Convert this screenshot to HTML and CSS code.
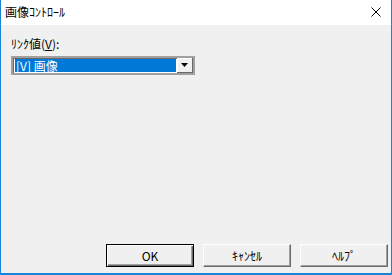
FILE: index.html
```html
<!DOCTYPE html>
<html lang="ja">
<head>
    <meta charset="UTF-8">
    <title>画像ｺﾝﾄﾛｰﾙ</title>
    <link rel="stylesheet" href="styles.css">
</head>
<body>
    <div class="window">
        <div class="titlebar">
            <span class="title-text">画像ｺﾝﾄﾛｰﾙ</span>
            <span class="close-btn">
                <svg width="10" height="10" viewBox="0 0 10 10">
                    <path d="M0.5 0.5 L9.5 9.5 M9.5 0.5 L0.5 9.5" stroke="#000" stroke-width="1"/>
                </svg>
            </span>
        </div>
        <div class="content">
            <div class="field-label">ﾘﾝｸ値(<u>V</u>):</div>
            <div class="combo">
                <div class="combo-value"><span class="combo-selected">[V] 画像</span></div>
                <div class="combo-button">
                    <svg width="7" height="4" viewBox="0 0 7 4">
                        <path d="M0 0 H7 L3.5 4 Z" fill="#000"/>
                    </svg>
                </div>
            </div>
            <div class="spacer"></div>
            <div class="button-row">
                <div class="btn btn-default">OK</div>
                <div class="btn">ｷｬﾝｾﾙ</div>
                <div class="btn">ﾍﾙﾌﾟ</div>
            </div>
        </div>
    </div>
</body>
</html>
```

FILE: styles.css
```css
body {
  margin: 0;
  font-family: "Noto Sans CJK JP", "Liberation Sans", sans-serif;
  font-size: 12px;
  color: #000;
  background: #fff;
}

.window {
  width: 390px;
  height: 273px;
  border-left: 1px solid #1883d7;
  border-right: 1px solid #1883d7;
  border-bottom: 2px solid #1883d7;
  display: flex;
  flex-direction: column;
  background: #f0f0f0;
}

.titlebar {
  height: 25px;
  background: #fff;
  display: flex;
  align-items: center;
  justify-content: space-between;
}

.title-text {
  padding-left: 4px;
  font-size: 12px;
  line-height: 14px;
  margin-top: -1px;
}

.close-btn {
  width: 10px;
  height: 10px;
  margin-right: 10px;
  margin-top: -2px;
  display: flex;
}

.content {
  flex: 1;
  display: flex;
  flex-direction: column;
  padding: 12px 3px 6px 10px;
}

.field-label {
  font-size: 12px;
  line-height: 14px;
  height: 19px;
}

.combo {
  width: 184px;
  height: 19px;
  border-top: 2px solid #a0a0a0;
  border-left: 2px solid #a0a0a0;
  border-bottom: 2px solid #a0a0a0;
  border-right: 2px solid #a0a0a0;
  box-shadow: inset 1px 1px 0 #696969;
  background: #fff;
  display: flex;
  box-sizing: border-box;
  height: 19px;
}

.combo-value {
  flex: 1;
  padding: 1px 1px 1px 2px;
  display: flex;
}

.combo-selected {
  flex: 1;
  background: #0078d7;
  color: #fff;
  font-size: 12px;
  line-height: 13px;
  padding-left: 1px;
}

.combo-button {
  width: 16px;
  background: #f0f0f0;
  border-right: 1px solid #696969;
  border-bottom: 1px solid #696969;
  box-shadow: inset 1px 1px 0 #fff;
  display: flex;
  align-items: center;
  justify-content: center;
  box-sizing: border-box;
}

.spacer {
  flex: 1;
}

.button-row {
  display: flex;
  justify-content: flex-end;
  gap: 9px;
}

.btn {
  width: 88px;
  height: 23px;
  box-sizing: border-box;
  background: #f0f0f0;
  border: 1px solid #fff;
  border-right-color: #696969;
  border-bottom-color: #696969;
  box-shadow: inset -1px -1px 0 #a0a0a0, 0 0 0 0 #000;
  display: flex;
  align-items: center;
  justify-content: center;
  font-size: 12px;
}

.btn-default {
  border: 1px solid #000;
  box-shadow: inset 1px 1px 0 #fff, inset -1px -1px 0 #696969, inset -2px -2px 0 #a0a0a0;
}
```
